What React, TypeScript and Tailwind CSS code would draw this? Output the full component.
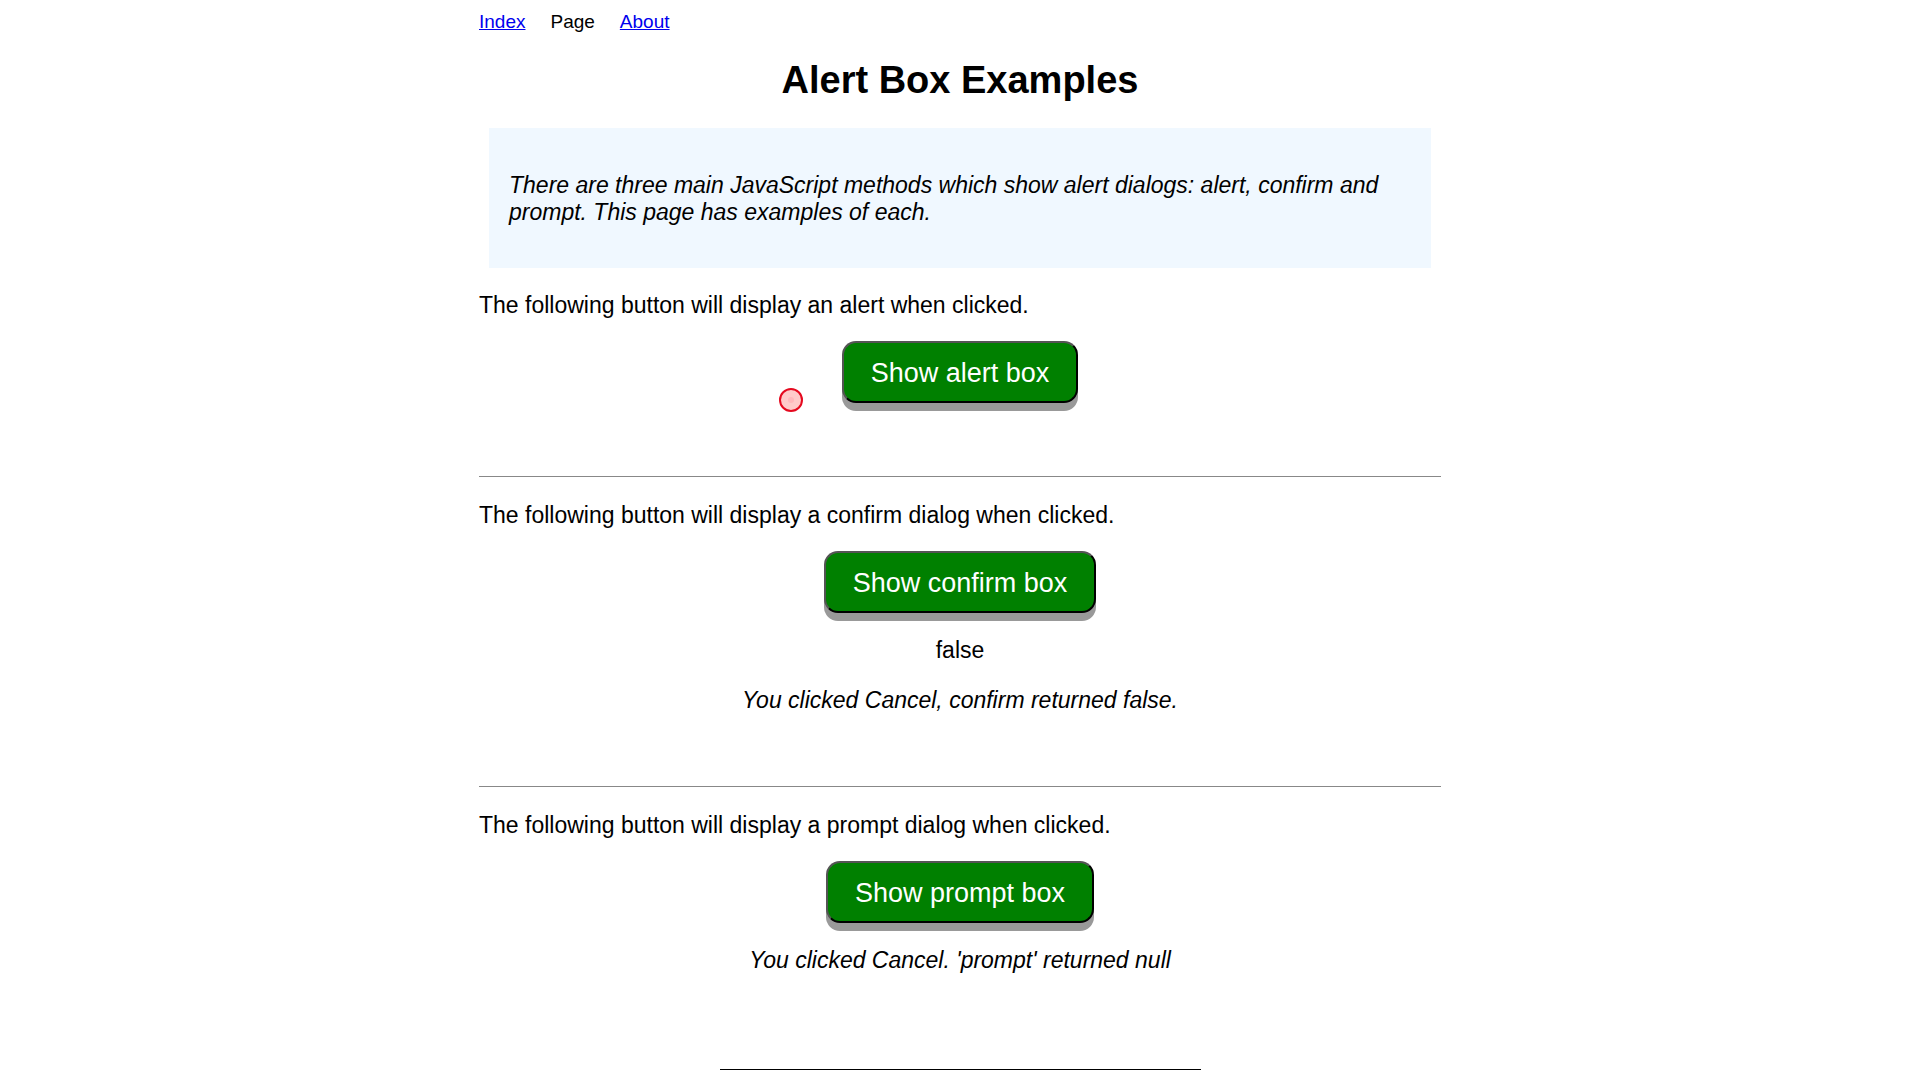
import React from "react";

function Action({ label }: { label: string }) {
  return (
    <button
      type="button"
      className="mx-auto block rounded-[14px] border-2 border-black bg-[#008000] px-[27px] pt-[15px] pb-[13px] text-[27px] leading-[30px] text-white shadow-[0_8px_#999] [border-style:outset]"
    >
      {label}
    </button>
  );
}

export default function App() {
  return (
    <div className="relative min-h-screen overflow-hidden bg-white font-['Liberation_Sans',Arial,sans-serif] text-black">
      <div className="mx-auto max-w-[962px]">
        <nav className="flex gap-[25px] pt-[11px] text-[19px] leading-[22px]">
          <a href="#index" className="text-[#0000ee] underline">Index</a>
          <span>Page</span>
          <a href="#about" className="text-[#0000ee] underline">About</a>
        </nav>
        <h1 className="mt-[25px] text-center text-[38px] leading-[44px] font-bold">Alert Box Examples</h1>
        <div className="mx-[10px] mt-[26px] mb-[24px] bg-[#f0f8ff] px-[20px] pt-[44px] pb-[42px] text-[23px] leading-[27px] italic">
          <p>There are three main JavaScript methods which show alert dialogs: alert, confirm and prompt. This page has examples of each.</p>
        </div>
        <section className="text-[23px] leading-[26px]">
          <p className="mb-[23px]">The following button will display an alert when clicked.</p>
          <Action label="Show alert box" />
        </section>
        <hr className="mt-[73px] mb-[25px] border-t border-[#888]" />
        <section className="text-[23px] leading-[26px]">
          <p className="mb-[23px]">The following button will display a confirm dialog when clicked.</p>
          <Action label="Show confirm box" />
          <p className="mt-[24px] text-center">false</p>
          <p className="mt-[24px] text-center italic">You clicked Cancel, confirm returned false.</p>
        </section>
        <hr className="mt-[73px] mb-[25px] border-t border-[#888]" />
        <section className="text-[23px] leading-[26px]">
          <p className="mb-[23px]">The following button will display a prompt dialog when clicked.</p>
          <Action label="Show prompt box" />
          <p className="mt-[24px] text-center italic">You clicked Cancel. 'prompt' returned null</p>
        </section>
        <hr className="mx-auto mt-[96px] w-1/2 border-t border-black" />
      </div>
      <div className="pointer-events-none absolute top-[388px] left-1/2 -ml-[181px] flex size-[24px] items-center justify-center rounded-full border-2 border-[#e5091f] bg-[#ffcaca]">
        <span className="size-[6px] rounded-full bg-[#ffb8bc]" />
      </div>
    </div>
  );
}
